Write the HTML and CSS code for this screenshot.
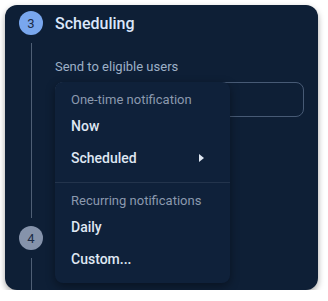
FILE: index.html
```html
<!DOCTYPE html>
<html lang="en">

<head>
    <meta charset="UTF-8" />
    <meta name="viewport" content="width=device-width, initial-scale=1.0" />
    <title>Scheduling</title>
    <link rel="stylesheet" href="styles.css">
</head>

<body>
    <div class="card">
        <div class="step-head">
            <div class="step-num active">3</div>
            <h2>Scheduling</h2>
        </div>

        <div class="step-body">
            <div class="rail"><span></span></div>
            <div class="step-content">
                <p class="hint">Send to eligible users</p>

                <div class="select-wrap">
                    <div class="select-box"></div>

                    <div class="menu">
                        <div class="menu-label">One-time notification</div>
                        <div class="menu-item">Now</div>
                        <div class="menu-item">Scheduled <span class="caret"></span></div>
                        <div class="menu-divider"></div>
                        <div class="menu-label">Recurring notifications</div>
                        <div class="menu-item">Daily</div>
                        <div class="menu-item">Custom...</div>
                    </div>
                </div>
            </div>
        </div>

        <div class="step-head">
            <div class="step-num">4</div>
        </div>
        <div class="step-body">
            <div class="rail"><span></span></div>
        </div>
    </div>
</body>

</html>
```

FILE: styles.css
```css
body {
    margin: 0;
    background: #ffffff;
    font-family: Roboto, "Liberation Sans", sans-serif;
}

.card {
    margin: 5px 0 0 5px;
    width: 313px;
    height: 285px;
    box-sizing: border-box;
    padding: 6px 14px 0;
    background: #0e1f36;
    border-radius: 12px;
    box-shadow: 0 3px 6px rgba(0, 0, 0, 0.35);
    overflow: hidden;
}

.step-head {
    display: flex;
    align-items: center;
    gap: 12px;
    height: 24px;
}

.step-head h2 {
    margin: 0;
    font-size: 16px;
    font-weight: 500;
    color: #dbe7fb;
}

.step-num {
    width: 24px;
    height: 24px;
    border-radius: 50%;
    background: #8593ab;
    color: #1b2b46;
    font-size: 13px;
    display: flex;
    align-items: center;
    justify-content: center;
}

.step-num.active {
    background: #79a7ee;
}

.step-body {
    display: flex;
    gap: 12px;
    height: 191px;
}

.rail {
    width: 24px;
    display: flex;
    justify-content: center;
    padding: 8px 0;
    box-sizing: border-box;
}

.rail span {
    width: 1px;
    background: #4f5f75;
}

.step-content {
    flex: 1;
    padding-top: 24px;
}

.hint {
    margin: 0 0 7px;
    font-size: 13px;
    line-height: 16px;
    color: #9db0c7;
}

.select-wrap {
    position: relative;
}

.select-box {
    height: 35px;
    box-sizing: border-box;
    border: 1px solid #475a75;
    border-radius: 8px;
}

.menu {
    position: absolute;
    top: 0;
    left: 0;
    width: 175px;
    padding: 8px 0 8px;
    background: #0f213a;
    border-radius: 8px;
    box-shadow: 0 3px 10px rgba(0, 0, 0, 0.4);
}

.menu-label {
    padding: 0 16px;
    height: 20px;
    line-height: 20px;
    font-size: 13px;
    color: #8b99ae;
}

.menu-item {
    padding: 0 16px;
    height: 32px;
    display: flex;
    align-items: center;
    justify-content: space-between;
    font-size: 14px;
    font-weight: 500;
    color: #dfe7f2;
}

.caret {
    width: 0;
    height: 0;
    margin-right: 10px;
    border-top: 4px solid transparent;
    border-bottom: 4px solid transparent;
    border-left: 5px solid #dfe7f2;
}

.menu-divider {
    height: 1px;
    margin: 8px 0;
    background: #23344c;
}
```
